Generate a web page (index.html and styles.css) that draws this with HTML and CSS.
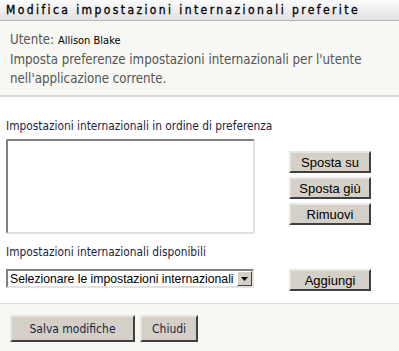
FILE: index.html
```html
<!DOCTYPE html>
<html lang="it">
<head>
    <meta charset="UTF-8">
    <title>Modifica impostazioni internazionali preferite</title>
    <link rel="stylesheet" href="styles.css">
</head>
<body>
    <header class="title-bar">
        <h1>Modifica impostazioni internazionali preferite</h1>
    </header>

    <section class="intro">
        <p class="user">Utente: <span class="user-name">Allison Blake</span></p>
        <p>Imposta preferenze impostazioni internazionali per l'utente nell'applicazione corrente.</p>
    </section>

    <section class="form">
        <label class="field-label" for="preferred">Impostazioni internazionali in ordine di preferenza</label>
        <div class="row">
            <select id="preferred" class="list-box" size="6"></select>
            <div class="side-buttons">
                <button class="btn">Sposta su</button>
                <button class="btn">Sposta giù</button>
                <button class="btn">Rimuovi</button>
            </div>
        </div>

        <label class="field-label available" for="available">Impostazioni internazionali disponibili</label>
        <div class="row add-row">
            <div class="combo">
                <span class="combo-text">Selezionare le impostazioni internazionali</span>
                <span class="combo-arrow">
                    <svg width="7" height="4" viewBox="0 0 7 4"><path d="M0 0h7L3.5 4z" fill="#000"/></svg>
                </span>
            </div>
            <button class="btn">Aggiungi</button>
        </div>
    </section>

    <footer class="actions">
        <button class="btn btn-footer save">Salva modifiche</button>
        <button class="btn btn-footer">Chiudi</button>
    </footer>
</body>
</html>
```

FILE: styles.css
```css
* {
    margin: 0;
    padding: 0;
    box-sizing: border-box;
}
html, body {
    height: 100%;
}
body {
    font-family: "DejaVu Sans Condensed", "DejaVu Sans", sans-serif;
    background: #fff;
    color: #1e1e3c;
    display: flex;
    flex-direction: column;
}
.title-bar {
    flex-shrink: 0;
    height: 21px;
    background: linear-gradient(180deg, #fbfbfb, #e2e2e2);
    border-bottom: 1px solid #b4b4b4;
    padding: 3px 6px 0;
}
.title-bar h1 {
    font-size: 12px;
    font-weight: normal;
    letter-spacing: 2.4px;
    color: #000;
    -webkit-text-stroke: 0.3px #000;
}
.intro {
    flex-shrink: 0;
    background: #f7f7f3;
    border-bottom: 2px solid #d8d8d8;
    padding: 10px 10px 0;
    height: 76px;
    color: #555;
    font-size: 13.2px;
    line-height: 19px;
}
.intro .user {
    line-height: 18px;
}
.user-name {
    font-size: 11px;
    color: #000;
}
.form {
    flex-shrink: 0;
    padding: 22px 6px 0;
    height: 207px;
    border-bottom: 1px solid #dedede;
}
.field-label {
    display: block;
    font-size: 11.8px;
    line-height: 14px;
    color: #1e1e3c;
    margin-bottom: 6px;
}
.field-label.available {
    margin-top: 11px;
    margin-bottom: 10px;
}
.row {
    display: flex;
    align-items: flex-start;
}
.list-box {
    width: 249px;
    height: 95px;
    border: 2px solid;
    border-color: #808080 #e4e2dc #e4e2dc #808080;
    background: #fff;
    outline: none;
    appearance: none;
}
.side-buttons {
    display: flex;
    flex-direction: column;
    gap: 4px;
    margin-left: 34px;
    margin-top: 12px;
}
.btn {
    width: 82px;
    height: 22px;
    background: #d4d0c8;
    border: 2px solid;
    border-color: #e8e6e0 #404040 #404040 #e8e6e0;
    font-family: "Liberation Sans", Arial, sans-serif;
    font-size: 13px;
    color: #000;
}
.add-row .btn {
    margin-left: 35px;
}
.combo {
    width: 248px;
    height: 19px;
    border: 2px solid;
    border-color: #808080 #e4e2dc #e4e2dc #808080;
    background: #fff;
    display: flex;
    align-items: center;
}
.combo-text {
    flex: 1;
    font-family: "Liberation Sans", Arial, sans-serif;
    font-size: 12.2px;
    color: #000;
    padding-left: 2px;
    white-space: nowrap;
    overflow: hidden;
}
.combo-arrow {
    width: 15px;
    height: 15px;
    background: #d4d0c8;
    border: 1px solid;
    border-color: #fff #404040 #404040 #fff;
    display: flex;
    align-items: center;
    justify-content: center;
}
.actions {
    flex: 1;
    background: #f7f7f3;
    padding: 11px 10px 0;
    display: flex;
    gap: 5px;
    align-items: flex-start;
}
.btn-footer {
    width: auto;
    height: 27px;
    padding: 0 10px;
    font-family: "DejaVu Sans Condensed", sans-serif;
    font-size: 12px;
    color: #1e1e3c;
}
.btn-footer.save {
    width: 125px;
}
```
